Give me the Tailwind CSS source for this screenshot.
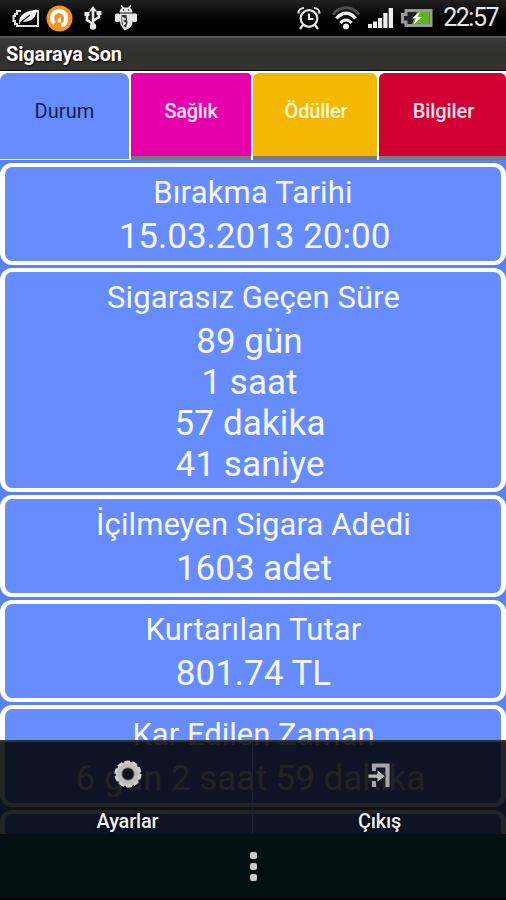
<!DOCTYPE html>
<html lang="tr">
    <head>
        <meta charset="UTF-8">
        <title>Sigaraya Son</title>
        <meta name="viewport" content="width=device-width, initial-scale=1.0">
        <script src="https://cdn.jsdelivr.net/npm/@tailwindcss/browser@4"></script>
    </head>
    <body class="bg-[#061014] font-['Roboto',sans-serif]">
        <div class="relative w-[506px] h-[900px] overflow-hidden flex flex-col">
            <!-- status bar -->
            <header class="h-9 shrink-0 flex items-center justify-between pl-3 pr-2 bg-linear-to-b from-[#202020] to-black">
                <div class="flex items-center">
                    <svg class="w-[28px] h-[20px]" viewBox="0 0 28 20" fill="none">
                        <path d="M9 3H5v3H3v2H1.500v5H3v3h2v2h21V3h-2" stroke="#ddd" stroke-width="2"/>
                        <path d="M7 14.500C7 7 13 3 25 1.500c-1 8-5 13-15 12l-3 3z" fill="#f0f0f0"/>
                        <path d="M8 15l10-8" stroke="#222" stroke-width="1.200"/>
                    </svg>
                    <svg class="w-[27px] h-[27px] ml-[6px]" viewBox="0 0 27 27" fill="none">
                        <circle cx="13.5" cy="13.5" r="13" fill="#f7941d"/>
                        <path d="M8.500 18.200a7 7 0 1 1 11.500-4c0 3-1 5.500-4.500 6" stroke="#fff" stroke-width="4"/>
                        <path d="M11.500 15.500c0-2 1.500-3 3.500-3v4c0 1.500-3.500 1.500-3.500-1z" fill="#fff"/>
                    </svg>
                    <svg class="w-[20px] h-[24px] ml-[10px]" viewBox="0 0 20 24" fill="none" stroke="#e8e8e8" stroke-width="2.600">
                        <path d="M10 3v18M10 18l-6-4V8M10 15l6-4V7"/>
                        <path d="M10 0l4 5.500H6z" fill="#e8e8e8" stroke="none"/>
                        <circle cx="10" cy="20.500" r="3.200" fill="#e8e8e8" stroke="none"/>
                        <path d="M1.500 6h5v4h-5zM13.500 5h5v4h-5z" fill="#e8e8e8" stroke="none"/>
                    </svg>
                    <svg class="w-[24px] h-[26px] ml-[11px]" viewBox="0 0 24 26" fill="#e8e8e8">
                        <path d="M5.500 7.500c0-2 1-3.500 2.500-4.500L6.500 1l1-1L10 2.500h4L16.500 0l1 1L16 3c1.500 1 2.500 2.500 2.500 4.500z"/>
                        <path d="M6 8.500h12.500V17c0 4-3 7-8 8.500-1-2-4.500-5-4.500-8.500z"/>
                        <rect x="1" y="8.500" width="5" height="8.500" rx="1.500"/>
                        <rect x="18" y="8.500" width="5" height="8.500" rx="1.500"/>
                        <path d="M7.500 10v9l4 4 2-5-1-8z" fill="#333"/>
                        <path d="M8 12l4 2-4 2 4 2-3 3" stroke="#ccc" stroke-width="1"/>
                        <circle cx="9.500" cy="5" r=".8" fill="#111"/>
                        <circle cx="14.500" cy="5" r=".8" fill="#111"/>
                    </svg>
                </div>
                <div class="flex items-center">
                    <svg class="w-[24px] h-[26px]" viewBox="0 0 24 26" fill="none" stroke="#e4e4e4" stroke-width="2.200">
                        <circle cx="12" cy="13.500" r="8.300"/>
                        <path d="M12 8.500V14h4.500M6 20l-3 4M18 20l3 4M1.500 8.500C1.500 5 4 3 7 3M22.500 8.500C22.500 5 20 3 17 3"/>
                    </svg>
                    <svg class="w-[28px] h-[24px] ml-[11px]" viewBox="0 0 28 24" fill="none">
                        <path d="M1 8.500C8-.5 20-.5 27 8.500" stroke="#505050" stroke-width="3"/>
                        <path d="M4.500 12.500c5.500-7 13.500-7 19 0" stroke="#eee" stroke-width="3.400"/>
                        <path d="M8.500 17c3-4 8-4 11 0" stroke="#eee" stroke-width="3.200"/>
                        <circle cx="14" cy="20.500" r="3" fill="#eee"/>
                    </svg>
                    <svg class="w-[25px] h-[20px] ml-[8px]" viewBox="0 0 25 20" fill="#eee">
                        <path d="M0 16h4v4H0zM5 13.500h4V20H5zM10 10h4.200v10H10zM15.300 5h4.200v15h-4.200zM20.700 0H25v20h-4.300z"/>
                    </svg>
                    <svg class="w-[33px] h-[20px] ml-[7px]" viewBox="0 0 33 20" fill="none">
                        <path d="M6 2.500h25v15H6V14H2.500V6.500H6z" fill="#222" stroke="#999" stroke-width="3"/>
                        <path d="M17 4h12.500v12H12z" fill="#5fb321"/>
                        <path d="M20 3.500l-8 7h4l-2.500 6 8.500-7.500h-4.500z" fill="#fff"/>
                    </svg>
                    <span class="ml-[10px] text-[25px] leading-9 text-[#e6e6e6] tracking-[-1.5px]">22:57</span>
                </div>
            </header>

            <!-- title bar -->
            <div class="h-[35px] shrink-0 px-[6px] border-t-2 border-b border-t-[#555] border-b-black bg-linear-to-b from-[#3b3b3b] to-[#323230] to-40%">
                <h1 class="text-[20px] leading-[32px] font-bold text-white tracking-[-0.15px] [text-shadow:1px_1px_2px_#000]">Sigaraya Son</h1>
            </div>

            <!-- tabs -->
            <nav class="h-[89px] shrink-0 flex pt-[2px] bg-white text-[20px] leading-[26px] text-center">
                <div class="w-[129px] mr-[2px] h-[86px] pt-[25px] rounded-t-lg bg-[#668cff] text-[#101c48] tracking-[0.1px]">Durum</div>
                <div class="w-[120px] mr-[2px] h-[87px] pt-[25px] rounded-t-sm bg-[#e600ac] border-b-4 border-[#7b7b78] text-[#ffe4f8] font-medium tracking-[-0.3px]">Sağlık</div>
                <div class="w-[124px] mr-[2px] h-[87px] pt-[25px] pl-[2px] rounded-t-md bg-[#f5b800] border-b-4 border-[#7b7b78] text-[#fff6dc] font-medium tracking-[-0.2px]">Ödüller</div>
                <div class="flex-1 h-[87px] pt-[25px] pl-[2px] rounded-t-md bg-[#d10032] border-b-4 border-[#7b7b78] text-[#ffe0e6] font-medium tracking-[-0.1px]">Bilgiler</div>
            </nav>

            <!-- stats -->
            <main class="flex-1 flex flex-col gap-[3px] pt-[3px] bg-[#5b82f4] text-center text-[#f4f7ff] text-[35px] leading-[41px]">
                <section class="h-[102px] shrink-0 rounded-xl border-4 border-x-5 border-white bg-[#668cff]">
                    <h2 class="pt-[7px] mb-[5px] text-[31px] leading-[37px] tracking-[0.2px]">Bırakma Tarihi</h2>
                    <p class="pl-[3px]">15.03.2013 20:00</p>
                </section>
                <section class="h-[224px] shrink-0 rounded-xl border-4 border-x-5 border-white bg-[#668cff]">
                    <h2 class="pt-[7px] mb-[5px] pl-px text-[31px] leading-[37px] tracking-[0.1px]">Sigarasız Geçen Süre</h2>
                    <p class="pr-[7px]">89 gün</p>
                    <p class="pr-[7px]">1 saat</p>
                    <p class="pr-[6px] tracking-[0.15px]">57 dakika</p>
                    <p class="pr-[6px] tracking-[0.15px]">41 saniye</p>
                </section>
                <section class="h-[102px] shrink-0 rounded-xl border-4 border-x-5 border-white bg-[#668cff]">
                    <h2 class="pt-[7px] mb-[5px] pl-px text-[31px] leading-[37px] tracking-[0.1px]">İçilmeyen Sigara Adedi</h2>
                    <p class="pl-[2px]">1603 adet</p>
                </section>
                <section class="h-[102px] shrink-0 rounded-xl border-4 border-x-5 border-white bg-[#668cff]">
                    <h2 class="pt-[7px] mb-[5px] pl-px text-[31px] leading-[37px] tracking-[0.2px]">Kurtarılan Tutar</h2>
                    <p class="pl-px">801.74 TL</p>
                </section>
                <section class="h-[102px] shrink-0 rounded-xl border-4 border-x-5 border-white bg-[#668cff]">
                    <h2 class="pt-[7px] mb-[5px] pl-px text-[31px] leading-[37px]">Kar Edilen Zaman</h2>
                    <p class="pr-[5px]">6 gün 2 saat 59 dakika</p>
                </section>
                <section class="h-[102px] shrink-0 rounded-xl border-4 border-x-5 border-white bg-[#668cff]"></section>
            </main>

            <!-- options menu -->
            <div class="absolute inset-x-0 bottom-0">
                <div class="h-[94px] grid grid-cols-2 bg-black/86 border-t-2 border-[#444]/60 text-[20px] leading-[24px] text-[#eee]">
                    <div class="flex flex-col items-center border-r border-[#1c2230] pl-[3px]">
                        <svg class="mt-[18px] w-[28px] h-[28px]" viewBox="0 0 28 28" fill="none">
                            <circle cx="14" cy="14" r="9" stroke="#bdbdbd" stroke-width="6.500"/>
                            <circle cx="14" cy="14" r="12" stroke="#cfcfcf" stroke-width="3" stroke-dasharray="5.380 2.160"/>
                            <circle cx="14" cy="14" r="6.300" fill="#10131c" stroke="#8c8c8c" stroke-width="1"/>
                        </svg>
                        <span class="mt-[21px] font-medium tracking-[-0.2px] [text-shadow:0_0_3px_#000]">Ayarlar</span>
                    </div>
                    <div class="flex flex-col items-center">
                        <svg class="mt-[20px] w-[24px] h-[26px]" viewBox="0 0 24 26" fill="none">
                            <path d="M6 9V3.500h13.500V25M6 19v6" stroke="#a4a4aa" stroke-width="4.200"/>
                            <path d="M0 12h9V7.500l8.500 6.700L9 20.500V16.300H0z" fill="#b8b8bc" stroke="#14161d" stroke-width="1"/>
                        </svg>
                        <span class="mt-[21px] font-medium tracking-[-0.2px] [text-shadow:0_0_3px_#000]">Çıkış</span>
                    </div>
                </div>
                <div class="h-[66px] flex flex-col items-center gap-[4px] pt-[18px] bg-[#051013] border-b-3 border-[#010405]">
                    <span class="size-[7px] rounded-xs bg-[#c9c9c9]"></span>
                    <span class="size-[7px] rounded-xs bg-[#c9c9c9]"></span>
                    <span class="size-[7px] rounded-xs bg-[#c9c9c9]"></span>
                </div>
            </div>
        </div>
    </body>
</html>
